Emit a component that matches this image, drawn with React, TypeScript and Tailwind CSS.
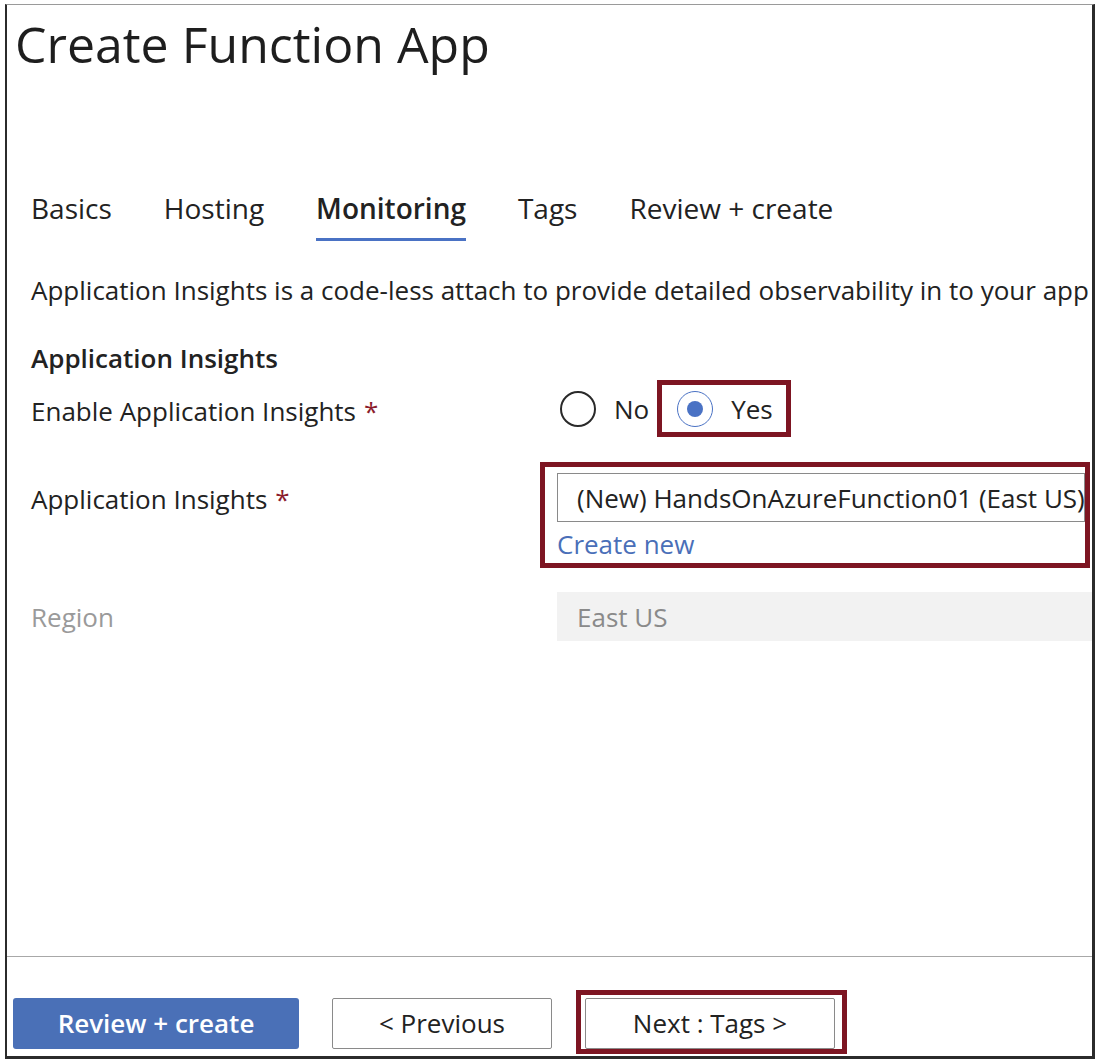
import React from 'react';

const tabs = ['Basics', 'Hosting', 'Monitoring', 'Tags', 'Review + create'];

const Radio = ({ checked }: { checked?: boolean }) =>
  checked ? (
    <span className="w-[36px] h-[36px] rounded-full border-[1.5px] border-[#4a72c4] flex items-center justify-center">
      <span className="w-[16px] h-[16px] rounded-full bg-[#4a72c4]" />
    </span>
  ) : (
    <span className="w-[36px] h-[36px] rounded-full border-2 border-[#2a2a2a]" />
  );

const Required = () => <span className="text-[#8b1c2c] ml-[8px]">*</span>;

const App = () => {
  return (
    <div
      className="w-[1100px] h-[1064px] bg-white pt-[4px] pl-[5px] text-[#222]"
      style={{ fontFamily: '"Open Sans", "Noto Sans", sans-serif' }}
    >
      <div className="w-[1090px] h-[1055px] border-l-2 border-t border-r-[3px] border-b-[3px] border-[#2b2b2b] border-t-[#9a9a9a] flex flex-col overflow-hidden">
        <main className="flex-1 whitespace-nowrap">
          {/* Title */}
          <h1 className="mt-[13px] ml-[8px] text-[50px] leading-[52px] text-[#1e1e1e]">Create Function App</h1>

          {/* Tabs */}
          <div className="mt-[120px] ml-[24px] flex gap-[52px] text-[28px] leading-[36px]">
            {tabs.map((t) =>
              t === 'Monitoring' ? (
                <div key={t} className="pb-[12px] border-b-[3px] border-[#4a72c4] font-semibold">
                  {t}
                </div>
              ) : (
                <div key={t} className="pb-[12px] border-b-[3px] border-transparent">
                  {t}
                </div>
              )
            )}
          </div>

          {/* Description */}
          <p className="mt-[31px] ml-[24px] text-[26px] leading-[36px]">
            Application Insights is a code-less attach to provide detailed observability in to your app
          </p>

          {/* Section */}
          <div className="ml-[24px] text-[26px] leading-[36px]">
            <h2 className="mt-[32px] font-semibold">Application Insights</h2>

            <div className="mt-[4px] flex items-center h-[57px]">
              <div className="w-[526px] shrink-0 pt-[4px]">
                Enable Application Insights
                <Required />
              </div>
              <div className="flex items-center">
                <div className="ml-[3px] flex items-center gap-[18px]">
                  <Radio />
                  <span>No</span>
                </div>
                <div className="ml-[8px] h-[57px] border-[5px] border-[#7d1522] pl-[15px] pr-[13px] flex items-center gap-[18px]">
                  <Radio checked />
                  <span>Yes</span>
                </div>
              </div>
            </div>

            <div className="mt-[25px] flex items-start">
              <div className="w-[526px] shrink-0 mt-[19px]">
                Application Insights
                <Required />
              </div>
              <div className="-ml-[17px] w-[550px] shrink-0 border-[5px] border-[#7d1522] pl-[12px] pt-[6px] pb-[4px]">
                <div className="h-[49px] border border-[#8a8a8a] flex items-center pl-[19px] overflow-hidden">
                  (New) HandsOnAzureFunction01 (East US)
                </div>
                <div className="mt-[7px] leading-[30px] text-[#4a6fb8]">Create new</div>
              </div>
            </div>

            <div className="mt-[24px] flex items-center">
              <div className="w-[526px] shrink-0 text-[#9a9a9a]">Region</div>
              <div className="w-[540px] shrink-0 h-[49px] bg-[#f2f2f2] flex items-center pl-[20px] text-[#8a8a8a]">East US</div>
            </div>
          </div>
        </main>

        {/* Footer */}
        <footer className="border-t border-[#a8a8a8] h-[100px] flex items-end pb-[7px] pl-[6px] text-[26px]">
          <button className="w-[286px] h-[51px] rounded-[3px] bg-[#4a70b7] text-white font-semibold">Review + create</button>
          <button className="ml-[33px] w-[220px] h-[51px] rounded-[2px] border border-[#8a8a8a] bg-white">&lt; Previous</button>
          <div className="ml-[24px] -mb-[5px] border-[5px] border-[#7d1522] pt-[3px] pl-[4px] pr-[7px]">
            <button className="w-[250px] h-[51px] rounded-[2px] border border-[#8a8a8a] bg-white">Next : Tags &gt;</button>
          </div>
        </footer>
      </div>
    </div>
  );
};

export default App;
